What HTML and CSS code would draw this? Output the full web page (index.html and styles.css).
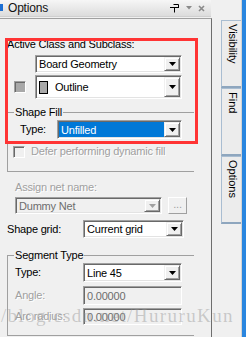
FILE: index.html
```html
<!DOCTYPE html>
<html lang="en">
<head>
    <meta charset="UTF-8">
    <meta name="viewport" content="width=device-width, initial-scale=1.0">
    <title>Options</title>
    <link rel="stylesheet" href="styles.css">
</head>
<body>
<div class="app">
    <div class="dock">
        <div class="titlebar">
            <span class="ticon"></span>
            <span class="ttitle">Options</span>
            <span class="tbtns">
                <svg width="10" height="9" viewBox="0 0 10 9"><path d="M0 3.5h9M3.5 0.5h5v3M4.5 3.5v5" stroke="#000" fill="none"/></svg>
                <svg width="6" height="4" viewBox="0 0 6 4"><polygon points="0,0 6,0 3,3.5" fill="#8a8a8a"/></svg>
                <svg width="7" height="7" viewBox="0 0 7 7"><path d="M1 1l5 5M6 1l-5 5" stroke="#8a8a8a" stroke-width="1.6"/></svg>
            </span>
        </div>
        <div class="panel">
            <div class="lbl lbl-active">Active Class and Subclass:</div>
            <div class="combo combo-class">
                <span class="val">Board Geometry</span>
                <span class="btn"><svg width="7" height="4"><polygon points="0,0 7,0 3.5,4"/></svg></span>
            </div>
            <div class="row row-sub">
                <span class="chk chk-color"></span>
                <div class="combo combo-sub">
                    <span class="val"><span class="swatch"></span>Outline</span>
                    <span class="btn"><svg width="7" height="4"><polygon points="0,0 7,0 3.5,4"/></svg></span>
                </div>
            </div>
            <fieldset class="group group-fill">
                <legend>Shape Fill</legend>
                <div class="row row-type">
                    <span class="flabel">Type:</span>
                    <div class="combo combo-fill sel">
                        <span class="val">Unfilled</span>
                        <span class="btn"><svg width="7" height="4"><polygon points="0,0 7,0 3.5,4"/></svg></span>
                    </div>
                </div>
                <div class="row row-defer">
                    <span class="chk chk-off"></span>
                    <span class="dis">Defer performing dynamic fill</span>
                </div>
            </fieldset>
            <div class="lbl lbl-assign dis">Assign net name:</div>
            <div class="row row-net">
                <div class="combo combo-net off">
                    <span class="val">Dummy Net</span>
                    <span class="btn"><svg width="7" height="4"><polygon points="0,0 7,0 3.5,4"/></svg></span>
                </div>
                <span class="dots">...</span>
            </div>
            <div class="row row-grid">
                <span class="glabel">Shape grid:</span>
                <div class="combo combo-grid">
                    <span class="val">Current grid</span>
                    <span class="btn"><svg width="7" height="4"><polygon points="0,0 7,0 3.5,4"/></svg></span>
                </div>
            </div>
            <fieldset class="group group-seg">
                <legend>Segment Type</legend>
                <div class="row row-seg">
                    <span class="slabel">Type:</span>
                    <div class="combo combo-seg">
                        <span class="val">Line 45</span>
                        <span class="btn"><svg width="7" height="4"><polygon points="0,0 7,0 3.5,4"/></svg></span>
                    </div>
                </div>
                <div class="row row-angle">
                    <span class="slabel dis">Angle:</span>
                    <span class="field field-angle">0.00000</span>
                </div>
                <div class="row row-arc">
                    <span class="slabel dis">Arc radius:</span>
                    <span class="field field-arc">0.00000</span>
                </div>
            </fieldset>
        </div>
    </div>
    <div class="tabs">
        <div class="tab">Visibility</div>
        <div class="tab">Find</div>
        <div class="tab">Options</div>
    </div>
    <div class="edge"></div>

    <div class="annot"></div>
    <div class="watermark">http://blog.csdn.net/HururuKun</div>
</div>
</body>
</html>
```

FILE: styles.css
```css
body {
    margin: 0;
    width: 246px;
    height: 337px;
    overflow: hidden;
    background-color: #f0f0f0;
    font: 11px "Liberation Sans", Arial, sans-serif;
    letter-spacing: -0.2px;
    color: #000;
}
.app {
    display: flex;
    height: 337px;
    position: relative;
}

/* left dock */
.dock {
    width: 212px;
    display: flex;
    flex-direction: column;
}
.titlebar {
    width: 211px;
    height: 17px;
    margin-bottom: 1px;
    display: flex;
    align-items: center;
    background: linear-gradient(#f6f6f6, #dcdcdc);
    border-bottom: 1px solid #cfcfcf;
    box-sizing: border-box;
}
.ticon {
    width: 3px;
    height: 7px;
    margin-top: -2px;
    background-color: #1c6fd4;
}
.ttitle {
    margin-left: 5px;
    font-size: 12px;
    line-height: 14px;
    color: #111;
}
.tbtns {
    margin-left: auto;
    margin-right: 6px;
    display: flex;
    align-items: center;
    gap: 6px;
}
.panel {
    flex: 1;
    border-top: 1px solid #a0a0a0;
    border-right: 1px solid #6e6e6e;
}

.lbl, .flabel, .glabel, .slabel, .dis {
    line-height: 13px;
    white-space: nowrap;
}
.dis {
    color: #a0a0a0;
    text-shadow: 1px 1px 0 #fff;
}
.row {
    display: flex;
    align-items: center;
}

/* combo boxes */
.combo {
    display: flex;
    box-sizing: border-box;
    background-color: #fff;
    border: 1px solid;
    border-color: #a0a0a0 #fff #fff #a0a0a0;
    box-shadow: inset 1px 1px 0 #696969, inset -1px -1px 0 #e3e3e3;
    padding: 1px;
}
.combo .val {
    flex: 1;
    display: flex;
    align-items: center;
    padding-left: 2px;
    white-space: nowrap;
    overflow: hidden;
}
.combo .btn {
    width: 16px;
    box-sizing: border-box;
    display: flex;
    align-items: center;
    justify-content: center;
    background-color: #f0f0f0;
    border: 1px solid;
    border-color: #f0f0f0 #696969 #696969 #f0f0f0;
    box-shadow: inset 1px 1px 0 #fff, inset -1px -1px 0 #a0a0a0;
}
.combo .btn svg {
    fill: #000;
}
.combo.off {
    background-color: #f0f0f0;
}
.combo.off .val {
    color: #6d6d6d;
}
.combo.off .btn svg {
    fill: #a0a0a0;
}
.combo.sel .val {
    background-color: #0078d7;
    color: #fff;
}

.lbl-active {
    margin: 19px 0 0 7px;
}
.combo-class {
    margin: 4px 0 0 35px;
    width: 147px;
    height: 18px;
}
.row-sub {
    margin-top: 2px;
}
.chk {
    width: 12px;
    height: 12px;
    box-sizing: border-box;
    border: 1px solid;
    border-color: #a0a0a0 #fff #fff #a0a0a0;
    box-shadow: inset 1px 1px 0 #696969;
}
.chk-color {
    margin-left: 14px;
    background-color: #a8a8a8;
}
.chk-off {
    margin-left: 5px;
    background-color: #f0f0f0;
}
.combo-sub {
    margin-left: 9px;
    width: 147px;
    height: 24px;
}
.swatch {
    width: 9px;
    height: 13px;
    box-sizing: border-box;
    border: 1px solid #000;
    background-color: #a9a9a9;
    margin: 0 7px 0 0;
}

/* group boxes */
.group {
    margin: 7px 0 0 7px;
    padding: 0;
    width: 187px;
    min-width: 0;
    box-sizing: border-box;
    border: 1px solid #a0a0a0;
    border-right: none;
}
.group legend {
    margin-left: 6px;
    padding: 0 1px;
    line-height: 13px;
}
.group-fill {
    padding-bottom: 13px;
}
.row-type {
    margin-top: 1px;
}
.flabel {
    margin-left: 12px;
    width: 37px;
}
.combo-fill {
    width: 125px;
    height: 19px;
}
.row-defer {
    margin-top: 6px;
    height: 13px;
}
.row-defer .dis {
    margin-left: 6px;
}

.lbl-assign {
    margin: 9px 0 0 15px;
}
.row-net {
    margin-top: 3px;
}
.combo-net {
    margin-left: 15px;
    width: 147px;
    height: 17px;
}
.dots {
    margin-left: 6px;
    width: 19px;
    height: 17px;
    box-sizing: border-box;
    border: 1px solid;
    border-color: #fff #a0a0a0 #a0a0a0 #fff;
    color: #a0a0a0;
    text-align: center;
    line-height: 13px;
}
.row-grid {
    margin-top: 6px;
}
.glabel {
    margin-left: 7px;
    width: 76px;
}
.combo-grid {
    width: 101px;
    height: 18px;
}

.group-seg {
    margin-top: 11px;
    padding-bottom: 10px;
}
.row-seg {
    margin-top: 1px;
}
.slabel {
    margin-left: 7px;
    width: 68px;
}
.combo-seg {
    width: 99px;
    height: 19px;
}
.field {
    width: 99px;
    box-sizing: border-box;
    border: 1px solid;
    border-color: #a0a0a0 #fff #fff #a0a0a0;
    box-shadow: inset 1px 1px 0 #696969;
    background-color: #f0f0f0;
    color: #6d6d6d;
    padding-left: 3px;
    display: flex;
    align-items: center;
}
.row-angle {
    margin-top: 4px;
}
.field-angle {
    height: 19px;
}
.row-arc {
    margin-top: 3px;
}
.field-arc {
    height: 17px;
}

/* side tabs */
.tabs {
    width: 29px;
    padding-top: 20px;
    display: flex;
    flex-direction: column;
    align-items: flex-end;
}
.tab {
    writing-mode: vertical-rl;
    width: 20px;
    height: 68px;
    box-sizing: border-box;
    border: 1px solid #a9bdd1;
    border-right: none;
    border-bottom: 2px solid #8ea6be;
    background-color: #ececec;
    padding-top: 3px;
    line-height: 17px;
    letter-spacing: 0;
}
.edge {
    width: 5px;
    background: linear-gradient(to right, #d4d4d4 0 1px, #2a86df 1px);
}

/* overlays */
.annot {
    position: absolute;
    left: 5px;
    top: 38px;
    width: 193px;
    height: 106px;
    box-sizing: border-box;
    border: 3px solid #ff3434;
}
.watermark {
    position: absolute;
    right: 12px;
    top: 306px;
    font: 19px "Liberation Serif", serif;
    line-height: 19px;
    letter-spacing: 1.4px;
    color: rgba(150, 150, 150, 0.45);
    white-space: nowrap;
    pointer-events: none;
}
```
